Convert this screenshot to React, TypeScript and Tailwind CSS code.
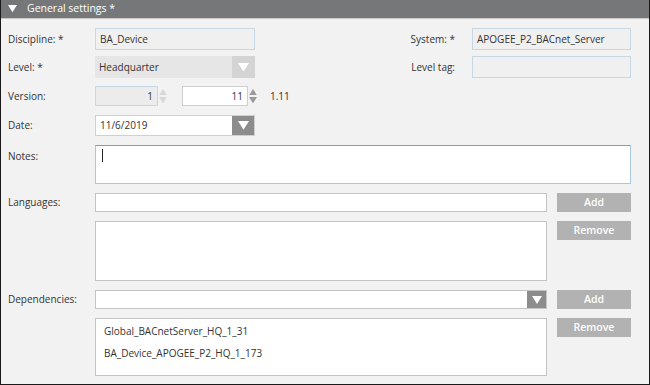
import React from 'react';

const font = { fontFamily: '"Open Sans", "Noto Sans", sans-serif' };

function Tri({ color = '#ffffff', up = false, size = 10 }: { color?: string; up?: boolean; size?: number }) {
  return (
    <svg width={size} height={size * 0.8} viewBox="0 0 10 8">
      <polygon points={up ? '5,0 10,8 0,8' : '0,0 10,0 5,8'} fill={color} />
    </svg>
  );
}

function Spinner({ color }: { color: string }) {
  return (
    <div className="flex flex-col justify-center gap-[2px] w-[9px] ml-[1px]">
      <Tri color={color} up size={8} />
      <Tri color={color} size={8} />
    </div>
  );
}

function Btn({ label }: { label: string }) {
  return (
    <div className="w-[74px] h-[19px] bg-[#b2b2b2] text-white flex items-center justify-center text-[10.5px] font-semibold">
      {label}
    </div>
  );
}

export default function App() {
  return (
    <div style={font} className="w-[650px] h-[385px] bg-[#f2f2f2] border-x border-b border-[#1a1a1a] flex flex-col text-[10px] text-[#333]">
      {/* HEADER */}
      <div className="h-[19px] bg-[#757778] text-white flex items-center pl-[7px] gap-[10px] text-[10.5px] border-b border-[#c8c8c8]">
        <Tri color="#ffffff" size={9} />
        <span>General settings *</span>
      </div>

      <div className="flex flex-col pl-[7px] pr-[18px] pt-[9px]">
        {/* Discipline / System */}
        <div className="flex items-center h-[22px]">
          <div className="w-[87px]">Discipline: *</div>
          <div className="w-[160px] h-full bg-[#f0f0f0] border border-[#c6d8e6] flex items-center px-[4px]">BA_Device</div>
          <div className="flex-1 text-right pr-[17px]">System: *</div>
          <div className="w-[159px] h-full bg-[#f0f0f0] border border-[#c6d8e6] flex items-center px-[4px]">APOGEE_P2_BACnet_Server</div>
        </div>

        {/* Level / Level tag */}
        <div className="flex items-center h-[22px] mt-[6px]">
          <div className="w-[87px]">Level: *</div>
          <div className="w-[160px] h-full bg-[#e6e6e6] flex items-center">
            <div className="flex-1 px-[4px]">Headquarter</div>
            <div className="w-[23px] h-full bg-[#d4d4d4] flex items-center justify-center">
              <Tri color="#ffffff" size={11} />
            </div>
          </div>
          <div className="flex-1 text-right pr-[17px]">Level tag:</div>
          <div className="w-[159px] h-full bg-[#f0f0f0] border border-[#c6d8e6]" />
        </div>

        {/* Version */}
        <div className="flex items-center h-[20px] mt-[8px]">
          <div className="w-[87px]">Version:</div>
          <div className="w-[63px] h-full bg-[#ececec] border border-[#c6d8e6] flex items-center justify-end px-[4px]">1</div>
          <Spinner color="#d8d8d8" />
          <div className="w-[14px]" />
          <div className="w-[66px] h-full bg-white border border-[#cfcfcf] flex items-center justify-end px-[4px]">11</div>
          <Spinner color="#9a9a9a" />
          <div className="ml-[12px]">1.11</div>
        </div>

        {/* Date */}
        <div className="flex items-center h-[21px] mt-[9px]">
          <div className="w-[87px]">Date:</div>
          <div className="w-[160px] h-full bg-white border border-[#cfcfcf] flex items-center">
            <div className="flex-1 px-[4px]">11/6/2019</div>
            <div className="w-[22px] h-full bg-[#8c8c8c] flex items-center justify-center">
              <Tri color="#ffffff" size={11} />
            </div>
          </div>
        </div>

        {/* Notes */}
        <div className="flex h-[39px] mt-[9px]">
          <div className="w-[87px] pt-[4px]">Notes:</div>
          <div className="flex-1 h-full bg-white border border-[#a9c8e0] border-t-[#6fa3cc] px-[6px] pt-[3px]">
            <div className="w-[1px] h-[13px] bg-[#222]" />
          </div>
        </div>

        {/* Languages */}
        <div className="flex items-center h-[19px] mt-[9px]">
          <div className="w-[87px]">Languages:</div>
          <div className="flex-1 h-full bg-white border border-[#c4c4c4]" />
          <div className="ml-[10px]"><Btn label="Add" /></div>
        </div>
        <div className="flex h-[60px] mt-[9px]">
          <div className="w-[87px]" />
          <div className="flex-1 h-full bg-white border border-[#c4c4c4]" />
          <div className="ml-[10px]"><Btn label="Remove" /></div>
        </div>

        {/* Dependencies */}
        <div className="flex items-center h-[19px] mt-[9px]">
          <div className="w-[87px]">Dependencies:</div>
          <div className="flex-1 h-full bg-white border border-[#c4c4c4] flex justify-end">
            <div className="w-[19px] h-full bg-[#8c8c8c] flex items-center justify-center">
              <Tri color="#ffffff" size={10} />
            </div>
          </div>
          <div className="ml-[10px]"><Btn label="Add" /></div>
        </div>
        <div className="flex h-[58px] mt-[9px]">
          <div className="w-[87px]" />
          <div className="flex-1 h-full bg-white border border-[#c4c4c4] flex flex-col pl-[8px] pt-[3px] gap-[4px] leading-[18px]">
            <div>Global_BACnetServer_HQ_1_31</div>
            <div>BA_Device_APOGEE_P2_HQ_1_173</div>
          </div>
          <div className="ml-[10px]"><Btn label="Remove" /></div>
        </div>
      </div>
    </div>
  );
}
